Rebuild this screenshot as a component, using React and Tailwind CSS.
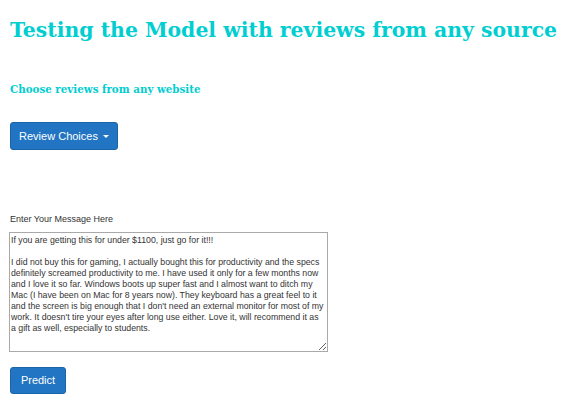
import React from 'react';

// Line breaks follow the wrapping seen in the screenshot
const review = [
  'If you are getting this for under $1100, just go for it!!!',
  '',
  'I did not buy this for gaming, I actually bought this for productivity and the specs',
  'definitely screamed productivity to me. I have used it only for a few months now',
  'and I love it so far. Windows boots up super fast and I almost want to ditch my',
  'Mac (I have been on Mac for 8 years now). They keyboard has a great feel to it',
  "and the screen is big enough that I don't need an external monitor for most of my",
  "work. It doesn't tire your eyes after long use either. Love it, will recommend it as",
  'a gift as well, especially to students.',
].join('\n');

export default function App() {
  return (
    <div className="min-h-[402px] bg-white px-[10px] font-['Liberation_Sans',Arial,sans-serif] text-[#333]">
      {/* Header */}
      <h1 className="pt-[18px] font-['DejaVu_Serif',Georgia,serif] text-[20.4px] font-bold leading-[24px] whitespace-nowrap text-[#00ced1]">
        Testing the Model with reviews from any source
      </h1>
      <h4 className="mt-[40px] font-['DejaVu_Serif',Georgia,serif] text-[10.3px] font-bold leading-[14px] text-[#00ced1]">
        Choose reviews from any website
      </h4>

      {/* Dropdown */}
      <button className="mt-[26px] flex h-[28px] w-[108px] items-center justify-center gap-[5px] rounded-[3px] border border-[#1a64a8] bg-[#2275c2] text-[11px] text-white">
        Review Choices
        <span className="mt-[1px] h-0 w-0 border-x-[3px] border-t-[3px] border-x-transparent border-t-white" />
      </button>

      {/* Message */}
      <label className="mt-[63px] block text-[9px] leading-[12px] text-[#333]">Enter Your Message Here</label>
      <textarea
        wrap="off"
        className="mt-[7px] block h-[120px] w-[319px] -ml-px resize-y overflow-hidden border border-[#a9a9a9] px-px py-[2px] text-[8.75px] leading-[11px] text-[#333] outline-none"
        defaultValue={review}
      />

      <button className="mt-[15px] flex h-[27px] w-[56px] items-center justify-center rounded-[3px] border border-[#1a64a8] bg-[#2275c2] text-[11px] text-white">
        Predict
      </button>
    </div>
  );
}
